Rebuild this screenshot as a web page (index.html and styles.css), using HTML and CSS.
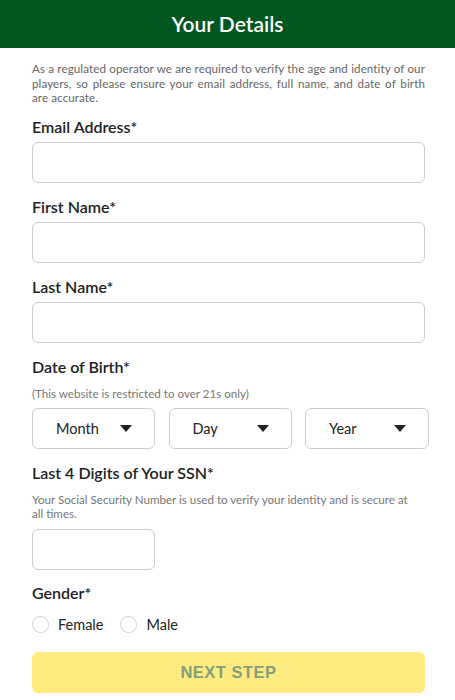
FILE: index.html
```html
<!DOCTYPE html>
<html lang="en">
<head>
<meta charset="utf-8">
<link rel="stylesheet" href="styles.css">
</head>
<body>
<header class="top">Your Details</header>
<main class="form">
  <p class="intro">As a regulated operator we are required to verify the age and identity of our players, so please ensure your email address, full name, and date of birth are&nbsp;accurate.</p>

  <div class="field">
    <label class="label">Email Address*</label>
    <div class="input"></div>
  </div>
  <div class="field">
    <label class="label">First Name*</label>
    <div class="input"></div>
  </div>
  <div class="field">
    <label class="label">Last Name*</label>
    <div class="input"></div>
  </div>

  <div class="field">
    <label class="label">Date of Birth*</label>
    <p class="hint">(This website is restricted to over 21s only)</p>
    <div class="dob">
      <div class="select"><span>Month</span><svg class="caret" viewBox="0 0 12 8"><path d="M0 0H12L6 7Z"/></svg></div>
      <div class="select"><span>Day</span><svg class="caret" viewBox="0 0 12 8"><path d="M0 0H12L6 7Z"/></svg></div>
      <div class="select"><span>Year</span><svg class="caret" viewBox="0 0 12 8"><path d="M0 0H12L6 7Z"/></svg></div>
    </div>
  </div>

  <div class="field">
    <label class="label">Last 4 Digits of Your SSN*</label>
    <p class="hint ssn">Your Social Security Number is used to verify your identity and is secure at all&nbsp;times.</p>
    <div class="input small"></div>
  </div>

  <div class="field gender">
    <label class="label">Gender*</label>
    <div class="radios">
      <span class="radio"><span class="dot"></span>Female</span>
      <span class="radio"><span class="dot"></span>Male</span>
    </div>
  </div>

  <button class="next">NEXT STEP</button>
</main>
</body>
</html>
```
FILE: styles.css
```css
* { box-sizing: border-box; }
html, body { margin: 0; padding: 0; background: #fff; }
body {
  font-family: Lato, "Open Sans", sans-serif;
  color: #222;
  width: 455px;
}
.top {
  height: 48px;
  background: #00561f;
  color: #fff;
  font-size: 21px;
  font-weight: 600;
  display: flex;
  align-items: center;
  justify-content: center;
  padding-bottom: 1px;
}
.form {
  padding: 0 30px 0 32px;
}
.intro {
  margin: 14px 0 0;
  font-size: 11.6px;
  line-height: 14.5px;
  color: #666;
  text-align: justify;
  letter-spacing: 0.1px;
}
.field { margin-top: 12px; }
.field + .field { margin-top: 15px; }
.field.gender { margin-top: 14px; }
.label {
  display: block;
  font-size: 16px;
  font-weight: 600;
  line-height: 18px;
  color: #222;
  margin-bottom: 6px;
}
.input {
  height: 41px;
  border: 1px solid #cfcfcf;
  border-radius: 6px;
}
.input.small { width: 123px; }
.hint {
  margin: 11px 0 7px;
  font-size: 11.6px;
  line-height: 14px;
  color: #777;
}
.hint.ssn { margin: 11px 0 8px; }
.dob {
  display: grid;
  grid-template-columns: 123px 123px 124px;
  column-gap: 13.5px;
  width: 400px;
}
.select {
  height: 41px;
  border: 1px solid #cfcfcf;
  border-radius: 6px;
  display: flex;
  align-items: center;
  justify-content: space-between;
  padding: 0 22px 0 23px;
  font-size: 14.5px;
  color: #222;
}
.caret { width: 12px; height: 8px; fill: #222; margin-top: 2px; }
.radios {
  display: flex;
  gap: 17px;
  margin-top: 14px;
}
.radio {
  display: flex;
  align-items: center;
  font-size: 14.5px;
  color: #222;
}
.dot {
  width: 17px;
  height: 17px;
  border: 1px solid #d4d4d4;
  border-radius: 50%;
  margin-right: 9px;
}
.next {
  display: block;
  width: 393px;
  height: 41px;
  margin-top: 19px;
  border: none;
  border-radius: 6px;
  background: #ffeb80;
  color: #849f79;
  font-family: "Liberation Sans", Arial, sans-serif;
  font-weight: bold;
  font-size: 16.5px;
  letter-spacing: 0.5px;
}
```
